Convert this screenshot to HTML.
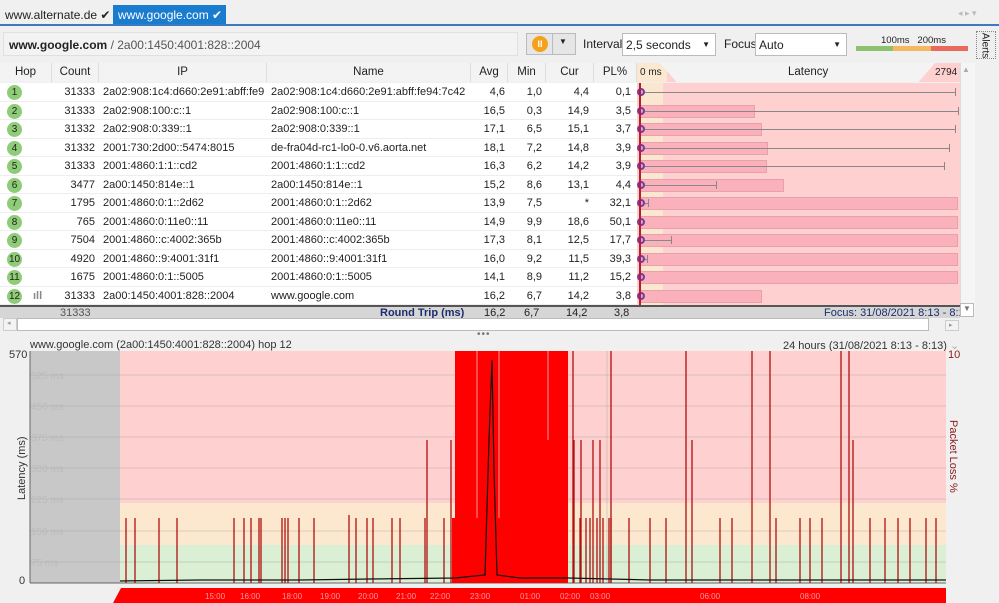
<!DOCTYPE html>
<html><head><meta charset="utf-8"><style>
*{margin:0;padding:0;box-sizing:border-box}
body{width:999px;height:603px;overflow:hidden;background:#f0f0f0;font-family:"Liberation Sans",sans-serif;font-size:11px;color:#222;position:relative}
.a{position:absolute;white-space:nowrap}
.row{position:absolute;left:0;width:960px;height:18.5px;background:#fff}
.c{position:absolute;top:3px;font-size:11px}
.r{text-align:right}
.hop{position:absolute;left:7px;top:2px;width:15px;height:15px;border-radius:50%;background:#8fcc78;font-size:10px;text-align:center;line-height:15px;color:#222}
.hd{position:absolute;top:63px;height:19px;background:#f3f3f3;border-right:1px solid #ddd;text-align:center;line-height:19px;font-size:11.5px}
.bar{position:absolute;height:13px;top:3px;background:#fbb1bb;border:1px solid #e8a0aa}
.wh{position:absolute;height:1px;top:9px;background:#888}
</style></head><body>
<!-- tabs -->
<div class="a" style="left:5px;top:8px;font-size:12px">www.alternate.de ✔</div>
<div class="a" style="left:113px;top:5px;width:113px;height:20px;background:#1a7ccf;color:#fff;font-size:12px;padding:3px 5px">www.google.com ✔</div>
<div class="a" style="left:0;top:24px;width:999px;height:2px;background:#3b7cc0"></div>
<div class="a" style="left:958px;top:8px;color:#bbb;font-size:9px">◂ ▸ ▾</div>
<!-- toolbar -->
<div class="a" style="left:3px;top:32px;width:515px;height:24px;background:#f3f3f3;border:1px solid #e0e0e0;padding:5px 5px;font-size:12px"><b>www.google.com</b> <span style="color:#555">/ 2a00:1450:4001:828::2004</span></div>
<div class="a" style="left:526px;top:33px;width:50px;height:22px;border:1px solid #bbb;background:#e6e6e6"></div>
<div class="a" style="left:532px;top:36px;width:16px;height:16px;border-radius:50%;background:#f3a21a;color:#fff;font-size:9px;text-align:center;line-height:16px;font-weight:bold">II</div>
<div class="a" style="left:552px;top:33px;width:1px;height:22px;background:#bbb"></div>
<div class="a" style="left:559px;top:37px;font-size:8px">▼</div>
<div class="a" style="left:583px;top:37px;font-size:12px">Interval</div>
<div class="a" style="left:622px;top:33px;width:94px;height:23px;background:#fff;border:1px solid #bbb;padding:4px 3px;font-size:12px">2,5 seconds<span style="position:absolute;right:5px;top:6px;font-size:8px">▼</span></div>
<div class="a" style="left:724px;top:37px;font-size:12px">Focus</div>
<div class="a" style="left:755px;top:33px;width:92px;height:23px;background:#fff;border:1px solid #bbb;padding:4px 3px;font-size:12px">Auto<span style="position:absolute;right:5px;top:6px;font-size:8px">▼</span></div>
<div class="a" style="left:881px;top:35px;font-size:9.5px">100ms &nbsp; 200ms</div>
<div class="a" style="left:856px;top:46px;width:37px;height:5px;background:#8cc26c"></div>
<div class="a" style="left:893px;top:46px;width:38px;height:5px;background:#f5b860"></div>
<div class="a" style="left:931px;top:46px;width:37px;height:5px;background:#ea6a5e"></div>
<div class="a" style="left:976px;top:31px;width:20px;height:28px;border:1px dotted #888;background:#eee"><div style="transform:rotate(90deg);position:absolute;left:-5px;top:8px;font-size:10px">Alerts</div></div>
<!-- header -->
<div class="hd" style="left:0;width:52px">Hop</div>
<div class="hd" style="left:52px;width:47px">Count</div>
<div class="hd" style="left:99px;width:168px">IP</div>
<div class="hd" style="left:267px;width:204px">Name</div>
<div class="hd" style="left:471px;width:37px">Avg</div>
<div class="hd" style="left:508px;width:38px">Min</div>
<div class="hd" style="left:546px;width:48px">Cur</div>
<div class="hd" style="left:594px;width:43px">PL%</div>
<div class="hd" style="left:637px;width:323px;background:#ffd0d0"></div>
<div class="a" style="left:637px;top:63px;width:30px;height:19px;background:#fbe8d0;clip-path:polygon(0 0,100% 0,100% 100%,0 100%)"></div>
<div class="a" style="left:660px;top:63px;width:275px;height:19px;background:#f3f3f3;clip-path:polygon(0 0,100% 0,94% 100%,6% 100%)"></div>
<div class="a" style="left:640px;top:67px;font-size:10px">0 ms</div>
<div class="a" style="left:788px;top:66px;font-size:11.5px">Latency</div>
<div class="a" style="left:935px;top:67px;font-size:10px">2794</div>
<div class="a" style="left:960px;top:63px;width:15px;height:254px;background:#f5f5f5;border-left:1px solid #ddd"></div>
<div class="a" style="left:962px;top:65px;font-size:8px;color:#aaa">▲</div>
<div class="a" style="left:960px;top:303px;width:14px;height:14px;border:1px solid #bbb;background:#fff;font-size:8px;color:#777;text-align:center">▼</div>
<div id="rows"></div>
<script>
const d=[
["1","31333","2a02:908:1c4:d660:2e91:abff:fe9","2a02:908:1c4:d660:2e91:abff:fe94:7c42","4,6","1,0","4,4","0,1",0,955],
["2","31333","2a02:908:100:c::1","2a02:908:100:c::1","16,5","0,3","14,9","3,5",755,958],
["3","31332","2a02:908:0:339::1","2a02:908:0:339::1","17,1","6,5","15,1","3,7",762,955],
["4","31332","2001:730:2d00::5474:8015","de-fra04d-rc1-lo0-0.v6.aorta.net","18,1","7,2","14,8","3,9",768,949],
["5","31333","2001:4860:1:1::cd2","2001:4860:1:1::cd2","16,3","6,2","14,2","3,9",767,944],
["6","3477","2a00:1450:814e::1","2a00:1450:814e::1","15,2","8,6","13,1","4,4",784,716],
["7","1795","2001:4860:0:1::2d62","2001:4860:0:1::2d62","13,9","7,5","*","32,1",958,648],
["8","765","2001:4860:0:11e0::11","2001:4860:0:11e0::11","14,9","9,9","18,6","50,1",958,0],
["9","7504","2001:4860::c:4002:365b","2001:4860::c:4002:365b","17,3","8,1","12,5","17,7",958,671],
["10","4920","2001:4860::9:4001:31f1","2001:4860::9:4001:31f1","16,0","9,2","11,5","39,3",958,647],
["11","1675","2001:4860:0:1::5005","2001:4860:0:1::5005","14,1","8,9","11,2","15,2",958,0],
["12","31333","2a00:1450:4001:828::2004","www.google.com","16,2","6,7","14,2","3,8",762,0]];
let h='';
d.forEach((r,i)=>{const y=83+i*18.5;
h+=`<div class="row" style="top:${y}px;border-bottom:1px solid #eee">
<div class="hop">${r[0]}</div>${i==11?'<div class="c" style="left:33px;color:#888;font-weight:bold">ıll</div>':''}
<div class="c r" style="left:52px;width:43px">${r[1]}</div>
<div class="c" style="left:103px">${r[2]}</div>
<div class="c" style="left:271px">${r[3]}</div>
<div class="c r" style="left:471px;width:34px">${r[4]}</div>
<div class="c r" style="left:508px;width:34px">${r[5]}</div>
<div class="c r" style="left:546px;width:43px">${r[6]}</div>
<div class="c r" style="left:594px;width:37px">${r[7]}</div>
<div style="position:absolute;left:637px;top:0;width:323px;height:19px;background:#ffd0d0"></div>
<div style="position:absolute;left:641px;top:0;width:22px;height:19px;background:#fbe6cf"></div>
${r[8]?`<div class="bar" style="left:640px;width:${r[8]-640}px"></div>`:''}
${r[9]?`<div class="wh" style="left:641px;width:${r[9]-641}px"></div><div style="position:absolute;left:${r[9]}px;top:5px;width:1px;height:8px;background:#888"></div>`:''}
<div style="position:absolute;left:637px;top:5px;width:8px;height:8px;border-radius:50%;border:2px solid #7a3aa0;background:#c9a8e0"></div>
</div>`});
document.getElementById('rows').innerHTML=h;
</script>
<div class="a" style="left:639px;top:83px;width:2px;height:222px;background:#b02030"></div>
<!-- summary -->
<div class="a" style="left:0;top:305px;width:960px;height:13px;background:#d6d6d6;border-top:2px solid #555;overflow:hidden;font-size:11px;line-height:13px">
<span class="a" style="left:60px;top:0;color:#555">31333</span>
<span class="a" style="left:380px;top:0;color:#1b2e6e;font-weight:bold">Round Trip (ms)</span>
<span class="a" style="left:484px;top:0">16,2</span><span class="a" style="left:524px;top:0">6,7</span><span class="a" style="left:566px;top:0">14,2</span><span class="a" style="left:614px;top:0">3,8</span>
<span class="a" style="left:824px;top:0;color:#1b2e6e">Focus: 31/08/2021 8:13 - 8:13</span></div>
<div class="a" style="left:3px;top:318px;width:14px;height:13px;border:1px solid #ccc;background:#f3f3f3;font-size:7px;color:#999;padding-left:3px">◂</div>
<div class="a" style="left:17px;top:318px;width:912px;height:13px;background:#fff;border:1px solid #bbb"></div>
<div class="a" style="left:945px;top:320px;width:14px;height:11px;border:1px solid #ccc;background:#f3f3f3;font-size:7px;color:#999;padding-left:3px">▸</div>
<div class="a" style="left:477px;top:329px;font-size:10px;color:#777;letter-spacing:1px">•••</div>
<!-- graph -->
<div class="a" style="left:30px;top:339px;font-size:11px;color:#333">www.google.com (2a00:1450:4001:828::2004) hop 12</div>
<div class="a" style="left:783px;top:339px;font-size:11px;color:#333">24 hours (31/08/2021 8:13 - 8:13) <span style="color:#aaa">⌄</span></div>
<svg class="a" style="left:0;top:345px" width="999" height="258" viewBox="0 345 999 258">
<rect x="30" y="351" width="90" height="232" fill="#c8c8c8"/>
<rect x="120" y="351" width="826" height="152" fill="#ffd0d0"/>
<rect x="120" y="503" width="826" height="42" fill="#fce8cf"/>
<rect x="120" y="545" width="826" height="38" fill="#dbefd4"/>
<g stroke="#999" stroke-opacity=".35"><line x1="30" y1="375" x2="946" y2="375"/><line x1="30" y1="406" x2="946" y2="406"/><line x1="30" y1="437" x2="946" y2="437"/><line x1="30" y1="468" x2="946" y2="468"/><line x1="30" y1="499" x2="946" y2="499"/><line x1="30" y1="531" x2="946" y2="531"/><line x1="30" y1="562" x2="946" y2="562"/><line x1="607" y1="351" x2="607" y2="583"/></g>
<g fill="#bbb" font-size="10" font-family="Liberation Sans"><text x="31" y="379">525 ms</text><text x="31" y="410">450 ms</text><text x="31" y="441">375 ms</text><text x="31" y="472">300 ms</text><text x="31" y="503">225 ms</text><text x="31" y="535">150 ms</text><text x="31" y="566">75 ms</text></g>
<g fill="#333" font-size="11" font-family="Liberation Sans"><text x="9" y="358">570</text><text x="19" y="584">0</text><text x="948" y="358" fill="#8a1a1a">10</text></g>
<text transform="translate(25,500) rotate(-90)" font-size="11" fill="#333" font-family="Liberation Sans">Latency (ms)</text>
<text transform="translate(950,420) rotate(90)" font-size="11" fill="#8a1a1a" font-family="Liberation Sans">Packet Loss %</text>
<line x1="30" y1="351" x2="30" y2="583" stroke="#666"/><line x1="30" y1="583" x2="946" y2="583" stroke="#666"/>
<rect x="455" y="351" width="113" height="232" fill="#f00"/>
<rect x="452" y="518" width="4" height="65" fill="#f00"/>
<g stroke="#fff" stroke-opacity=".6"><line x1="477" y1="351" x2="477" y2="518"/><line x1="499" y1="351" x2="499" y2="518"/><line x1="548" y1="351" x2="548" y2="440"/></g>
<g stroke="#b01010" stroke-width="1.3">
<line x1="126" y1="518" x2="126" y2="583"/><line x1="135" y1="518" x2="135" y2="583"/><line x1="159" y1="518" x2="159" y2="583"/><line x1="177" y1="518" x2="177" y2="583"/><line x1="234" y1="518" x2="234" y2="583"/><line x1="244" y1="518" x2="244" y2="583"/><line x1="251" y1="518" x2="251" y2="583"/><line x1="259" y1="518" x2="259" y2="583"/><line x1="261" y1="518" x2="261" y2="583"/><line x1="282" y1="518" x2="282" y2="583"/><line x1="285" y1="518" x2="285" y2="583"/><line x1="288" y1="518" x2="288" y2="583"/><line x1="299" y1="518" x2="299" y2="583"/><line x1="314" y1="518" x2="314" y2="583"/><line x1="349" y1="515" x2="349" y2="583"/><line x1="356" y1="518" x2="356" y2="583"/><line x1="367" y1="518" x2="367" y2="583"/><line x1="373" y1="518" x2="373" y2="583"/><line x1="392" y1="518" x2="392" y2="583"/><line x1="400" y1="518" x2="400" y2="583"/><line x1="425" y1="518" x2="425" y2="583"/><line x1="444" y1="518" x2="444" y2="583"/>
<line x1="427" y1="440" x2="427" y2="583"/><line x1="451" y1="440" x2="451" y2="583"/>
<line x1="573" y1="351" x2="573" y2="583"/><line x1="574" y1="440" x2="574" y2="583"/><line x1="581" y1="440" x2="581" y2="583"/><line x1="593" y1="440" x2="593" y2="583"/><line x1="600" y1="440" x2="600" y2="583"/><line x1="580" y1="518" x2="580" y2="583"/><line x1="586" y1="518" x2="586" y2="583"/><line x1="590" y1="518" x2="590" y2="583"/><line x1="597" y1="518" x2="597" y2="583"/><line x1="603" y1="518" x2="603" y2="583"/><line x1="609" y1="518" x2="609" y2="583"/><line x1="611" y1="518" x2="611" y2="583"/><line x1="629" y1="518" x2="629" y2="583"/>
<line x1="611" y1="351" x2="611" y2="583"/><line x1="686" y1="351" x2="686" y2="583"/><line x1="692" y1="440" x2="692" y2="583"/><line x1="752" y1="351" x2="752" y2="583"/><line x1="770" y1="351" x2="770" y2="583"/><line x1="841" y1="351" x2="841" y2="583"/><line x1="849" y1="351" x2="849" y2="583"/><line x1="853" y1="440" x2="853" y2="583"/>
<line x1="650" y1="518" x2="650" y2="583"/><line x1="666" y1="518" x2="666" y2="583"/><line x1="720" y1="518" x2="720" y2="583"/><line x1="732" y1="518" x2="732" y2="583"/><line x1="776" y1="518" x2="776" y2="583"/><line x1="800" y1="518" x2="800" y2="583"/><line x1="810" y1="518" x2="810" y2="583"/><line x1="822" y1="518" x2="822" y2="583"/><line x1="870" y1="518" x2="870" y2="583"/><line x1="885" y1="518" x2="885" y2="583"/><line x1="898" y1="518" x2="898" y2="583"/><line x1="910" y1="518" x2="910" y2="583"/><line x1="926" y1="518" x2="926" y2="583"/><line x1="936" y1="518" x2="936" y2="583"/>
</g>
<polyline fill="none" stroke="#111" stroke-width="1.2" points="120,581 200,580 300,580 370,579 455,578 485,575 489,440 492,360 494,470 497,575 520,578 568,578 650,580 800,580 946,580"/>
<polygon points="113,603 121,588 946,588 946,603" fill="#f00"/>
<g fill="#fff" font-size="8" font-family="Liberation Sans" opacity=".6"><text x="205" y="599">15:00</text><text x="240" y="599">16:00</text><text x="282" y="599">18:00</text><text x="320" y="599">19:00</text><text x="358" y="599">20:00</text><text x="396" y="599">21:00</text><text x="430" y="599">22:00</text><text x="470" y="599">23:00</text><text x="520" y="599">01:00</text><text x="560" y="599">02:00</text><text x="590" y="599">03:00</text><text x="700" y="599">06:00</text><text x="800" y="599">08:00</text></g>
</svg>
</body></html>
